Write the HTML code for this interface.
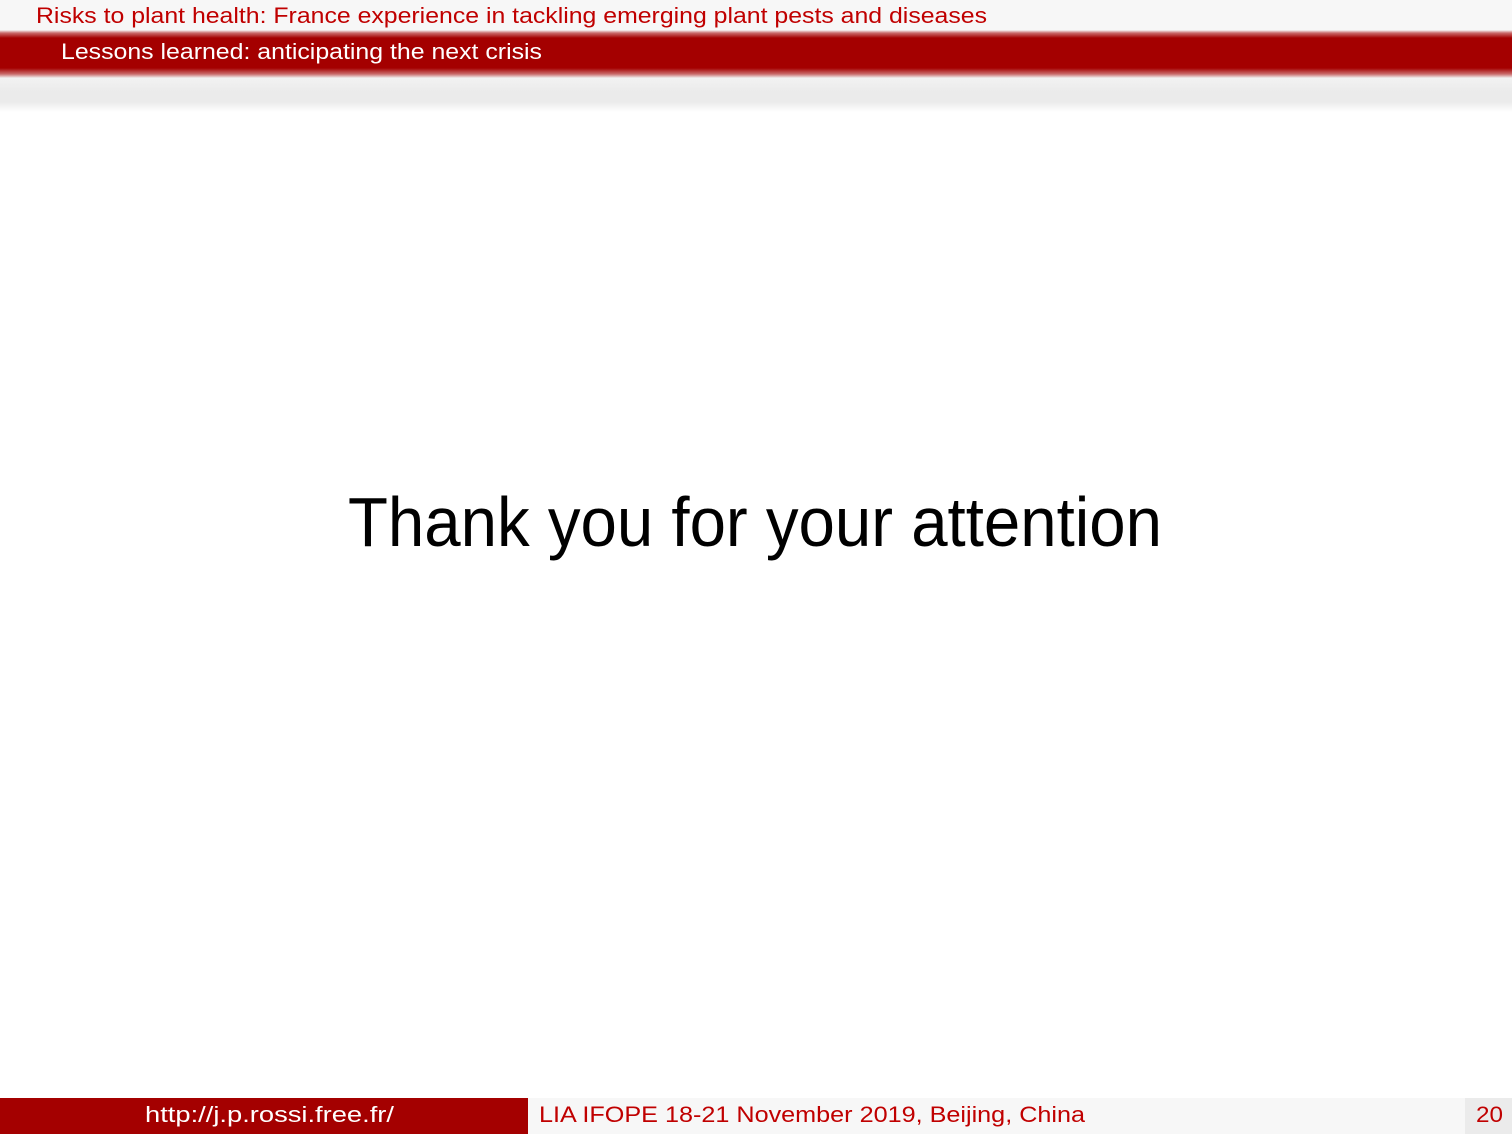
<!DOCTYPE html>
<html><head><meta charset="utf-8"><style>
body{margin:0;width:1512px;height:1134px;position:relative;background:#fff;overflow:hidden;font-family:"Liberation Sans",sans-serif}
.t{position:absolute;white-space:nowrap;transform-origin:0 0;line-height:1}
#top{position:absolute;left:0;top:0;width:1512px;height:33px;background:#f7f7f7}
#red{position:absolute;left:0;top:30px;width:1512px;height:48px;background:linear-gradient(#f7f7f7 0,#c96a6a 3px,#a40000 8px,#a40000 38px,#c96a6a 44px,#f0f0f0 48px)}
#grey{position:absolute;left:0;top:78px;width:1512px;height:34px;background:linear-gradient(#f2f2f2,#ebebeb 40%,#ebebeb 70%,#fff)}
#f1{position:absolute;left:0;top:1098px;width:528px;height:36px;background:#a40000}
#f2{position:absolute;left:528px;top:1098px;width:937px;height:36px;background:#f7f7f7}
#f3{position:absolute;left:1465px;top:1098px;width:47px;height:36px;background:#ebebeb}
</style></head><body>
<div id="top"></div><div id="red"></div><div id="grey"></div>
<div class="t" data-w="951" style="left:36px;top:5px;font-size:22px;color:#c00000">Risks to plant health: France experience in tackling emerging plant pests and diseases</div>
<div class="t" data-w="481" style="left:61px;top:41px;font-size:22px;color:#fff">Lessons learned: anticipating the next crisis</div>
<div class="t" data-w="814" style="left:348px;top:487px;font-size:70px;color:#000">Thank you for your attention</div>
<div id="f1"></div><div id="f2"></div><div id="f3"></div>
<div class="t" data-w="249" style="left:145px;top:1104px;font-size:22px;color:#fff">http://j.p.rossi.free.fr/</div>
<div class="t" data-w="546" style="left:539px;top:1104px;font-size:22px;color:#c00000">LIA IFOPE 18-21 November 2019, Beijing, China</div>
<div class="t" data-w="27" style="left:1476px;top:1104px;font-size:22px;color:#c00000">20</div>
<script>
document.querySelectorAll('.t').forEach(function(e){var w=+e.getAttribute('data-w');var r=e.getBoundingClientRect().width;if(r>0)e.style.transform='scaleX('+(w/r)+')';});
</script>
</body></html>
